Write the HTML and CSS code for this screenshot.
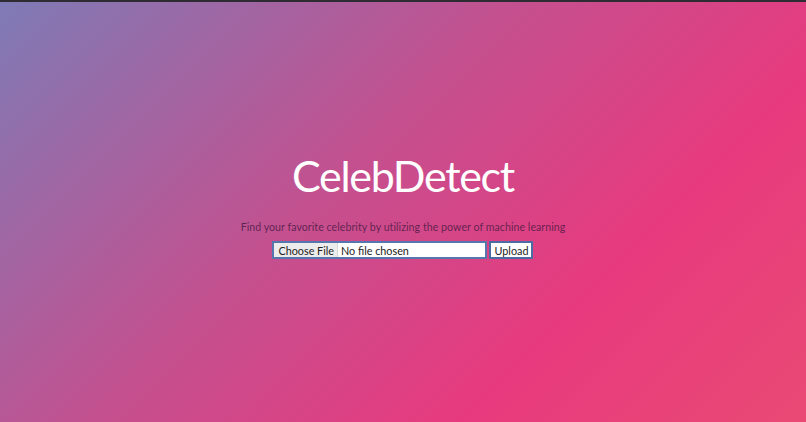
FILE: index.html
```html
<!DOCTYPE html>
<html lang="en">
<head>
<meta charset="utf-8">
<title>CelebDetect</title>
<link rel="stylesheet" href="styles.css">
</head>
<body>
<main class="page">
  <section class="hero">
    <h1 class="title">CelebDetect</h1>
    <p class="tagline">Find your favorite celebrity by utilizing the power of machine learning</p>
    <form class="upload-form">
      <label class="file-field">
        <span class="file-btn">Choose File</span>
        <span class="file-name">No file chosen</span>
      </label>
      <button type="button" class="upload-btn">Upload</button>
    </form>
  </section>
</main>
</body>
</html>
```
FILE: styles.css
```css
html, body {
  margin: 0;
  padding: 0;
}
body {
  width: 806px;
  height: 422px;
  overflow: hidden;
  font-family: "Lato", "Open Sans", sans-serif;
}
.page {
  box-sizing: border-box;
  height: 422px;
  border-top: 2px solid #2e2b33;
  background: linear-gradient(135deg, #7e7bb6 0%, #c4508f 42%, #e83a7e 72%, #e94a74 100%);
  display: flex;
  flex-direction: column;
  align-items: center;
}
.hero {
  display: flex;
  flex-direction: column;
  align-items: center;
  padding-top: 147px;
}
.title {
  margin: 0;
  font-weight: 400;
  font-size: 43px;
  line-height: 54px;
  color: #ffffff;
  letter-spacing: -1.3px;
}
.tagline {
  margin: 17px 0 0;
  font-size: 10.6px;
  line-height: 14px;
  color: rgba(60, 20, 60, 0.75);
  letter-spacing: 0.05px;
}
.upload-form {
  margin-top: 7px;
  display: flex;
  align-items: center;
  gap: 2px;
}
.file-field {
  box-sizing: border-box;
  width: 215px;
  height: 18px;
  border: 2px solid #5677ad;
  background: #ffffff;
  display: flex;
  align-items: center;
  font-size: 10.8px;
  color: #222;
}
.file-btn {
  background: #ececec;
  height: 100%;
  display: flex;
  align-items: center;
  padding: 0 3px 0 4px;
  border-right: 1px solid #d8d8d8;
}
.file-name {
  padding-left: 3px;
}
.upload-btn {
  box-sizing: border-box;
  height: 18px;
  width: 44px;
  padding: 0;
  border: 2px solid #4d6ca3;
  background: #ffffff;
  font-family: inherit;
  font-size: 10.8px;
  color: #222;
}
```
